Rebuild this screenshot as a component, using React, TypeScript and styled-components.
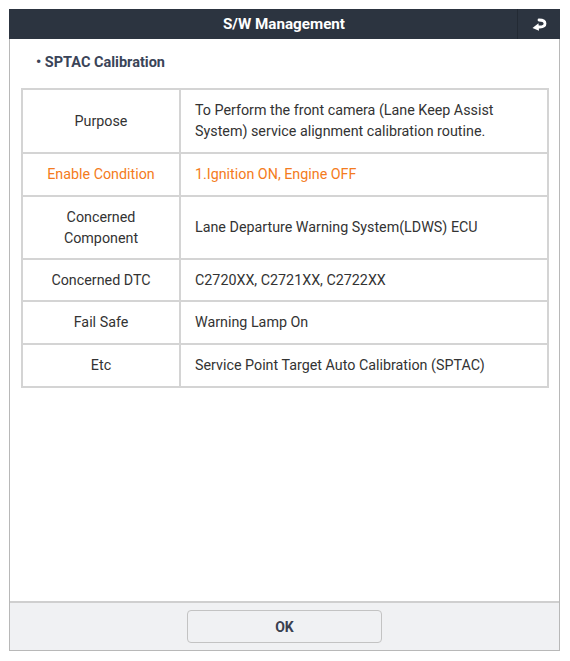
import React from "react";
import { createGlobalStyle, styled } from "styled-components";

const GlobalStyle = createGlobalStyle`
  html, body {
    margin: 0;
    padding: 0;
    background: #ffffff;
  }
  body {
    font-family: Roboto, "Liberation Sans", Arial, sans-serif;
  }
`;

const Page = styled.div`
  padding: 9px 10px 10px 9px;
`;

const Dialog = styled.div`
  width: 551px;
  height: 642px;
  box-sizing: border-box;
  border: 1px solid #b8b8b8;
  border-top: none;
  display: flex;
  flex-direction: column;
  background: #ffffff;
`;

const Header = styled.div`
  height: 30px;
  background: #2c3440;
  display: flex;
  align-items: center;
  margin: 0 -1px;
`;

const Title = styled.div`
  flex: 1;
  text-align: center;
  color: #ffffff;
  font-size: 15.2px;
  font-weight: 700;
  padding-left: 42px;
`;

const BackButton = styled.div`
  width: 42px;
  height: 30px;
  border-left: 1px solid #232a34;
  display: flex;
  align-items: center;
  justify-content: center;
`;

const Body = styled.div`
  flex: 1;
  padding: 15px 10px 0 11px;
`;

const Section = styled.div`
  color: #3a4458;
  font-size: 14.5px;
  font-weight: 700;
  padding-left: 15px;
  height: 34px;
`;

const Table = styled.table`
  width: 528px;
  border-collapse: collapse;
  border: 2px solid #cfcfcf;
  font-size: 14.3px;
  color: #333333;
`;

const Row = styled.tr<{ $h: number }>`
  height: ${(p) => p.$h}px;
`;

const Label = styled.td<{ $accent?: boolean }>`
  width: 158px;
  text-align: center;
  border: 2px solid #d4d4d4;
  line-height: 21px;
  color: ${(p) => (p.$accent ? "#f47b20" : "#333333")};
  padding: 0 6px;
  box-sizing: border-box;
`;

const Value = styled.td<{ $accent?: boolean }>`
  border: 2px solid #d4d4d4;
  padding: 0 12px 0 14px;
  line-height: 21px;
  color: ${(p) => (p.$accent ? "#f47b20" : "#333333")};
`;

const Footer = styled.div`
  height: 47px;
  border-top: 2px solid #cfcfcf;
  background: #f0f1f3;
  display: flex;
  justify-content: center;
  align-items: center;
`;

const OkButton = styled.button`
  width: 195px;
  height: 33px;
  border: 1px solid #c3c3c3;
  border-radius: 4px;
  background: #f0f1f3;
  font-family: inherit;
  font-size: 14px;
  font-weight: 700;
  color: #3a4050;
`;

const rows = [
  {
    label: "Purpose",
    value:
      "To Perform the front camera (Lane Keep Assist System) service alignment calibration routine.",
    h: 64,
  },
  { label: "Enable Condition", value: "1.Ignition ON, Engine OFF", h: 43, accent: true },
  {
    label: (
      <>
        Concerned
        <br />
        Component
      </>
    ),
    value: "Lane Departure Warning System(LDWS) ECU",
    h: 63,
  },
  { label: "Concerned DTC", value: "C2720XX, C2721XX, C2722XX", h: 42 },
  { label: "Fail Safe", value: "Warning Lamp On", h: 43 },
  { label: "Etc", value: "Service Point Target Auto Calibration (SPTAC)", h: 43 },
];

function ReturnIcon() {
  return (
    <svg width="15" height="13" viewBox="0 0 15 13">
      <path
        d="M7 2 C11 2 13 3.3 13 5.6 C13 7.9 11 9 8 9 H5.5"
        fill="none"
        stroke="#ffffff"
        strokeWidth="2.8"
        strokeLinecap="round"
      />
      <path d="M0.5 10 L6.5 5.2 L7 12.8 Z" fill="#ffffff" />
    </svg>
  );
}

function App() {
  return (
    <Page>
      <GlobalStyle />
      <Dialog>
        <Header>
          <Title>S/W Management</Title>
          <BackButton>
            <ReturnIcon />
          </BackButton>
        </Header>
        <Body>
          <Section>• SPTAC Calibration</Section>
          <Table>
            <tbody>
              {rows.map((r, i) => (
                <Row key={i} $h={r.h}>
                  <Label $accent={r.accent}>{r.label}</Label>
                  <Value $accent={r.accent}>{r.value}</Value>
                </Row>
              ))}
            </tbody>
          </Table>
        </Body>
        <Footer>
          <OkButton>OK</OkButton>
        </Footer>
      </Dialog>
    </Page>
  );
}

export default App;
